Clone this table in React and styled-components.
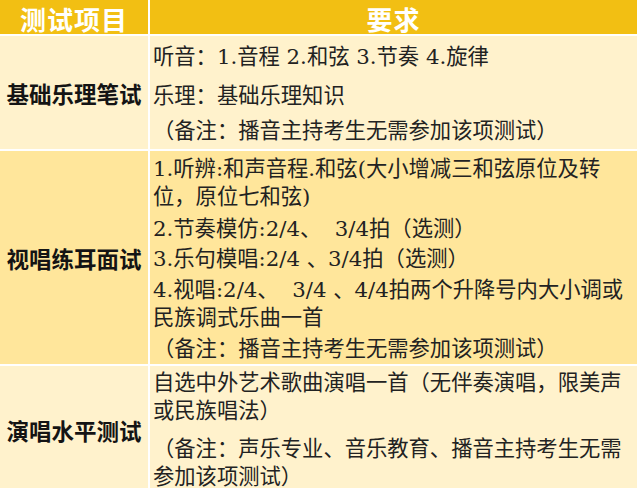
import React from "react";
import styled, { createGlobalStyle } from "styled-components";

const GlobalStyle = createGlobalStyle`
  html, body {
    margin: 0;
    padding: 0;
    background: #fff;
  }
  body {
    font-family: "Noto Sans CJK SC", "Noto Sans", sans-serif;
    color: #1c1c1c;
  }
`;

const rows = [
  {
    label: "基础乐理笔试",
    tone: "light",
    top: 4,
    bottom: 1,
    lineHeight: 34,
    paras: [
      { gap: 0, lines: ["听音：1.音程 2.和弦 3.节奏 4.旋律"] },
      { gap: 5, lines: ["乐理：基础乐理知识"] },
      { gap: 1, lines: ["（备注：播音主持考生无需参加该项测试）"] },
    ],
  },
  {
    label: "视唱练耳面试",
    tone: "dark",
    top: 4,
    bottom: 1,
    lineHeight: 28,
    paras: [
      {
        gap: 0,
        lines: ["1.听辨:和声音程.和弦(大小增减三和弦原位及转", "位，原位七和弦)"],
      },
      { gap: 4, lines: ["2.节奏模仿:2/4、  3/4拍（选测）"] },
      { gap: 2, lines: ["3.乐句模唱:2/4 、3/4拍（选测）"] },
      {
        gap: 3,
        lines: ["4.视唱:2/4、  3/4 、4/4拍两个升降号内大小调或", "民族调式乐曲一首"],
      },
      { gap: 3, lines: ["（备注：播音主持考生无需参加该项测试）"] },
    ],
  },
  {
    label: "演唱水平测试",
    tone: "light",
    top: 3,
    bottom: 3,
    lineHeight: 28,
    paras: [
      {
        gap: 0,
        lines: ["自选中外艺术歌曲演唱一首（无伴奏演唱，限美声", "或民族唱法）"],
      },
      {
        gap: 10,
        lines: ["（备注：声乐专业、音乐教育、播音主持考生无需", "参加该项测试）"],
      },
    ],
  },
];

const App = () => {
  return (
    <>
      <GlobalStyle />
      <Table>
        <HeadCell>测试项目</HeadCell>
        <HeadCell>要求</HeadCell>
        {rows.map((row) => (
          <React.Fragment key={row.label}>
            <LabelCell $tone={row.tone}>{row.label}</LabelCell>
            <BodyCell $tone={row.tone} $top={row.top} $bottom={row.bottom}>
              {row.paras.map((p, i) => (
                <Para key={i} $gap={p.gap} $lh={row.lineHeight}>
                  {p.lines.map((l) => (
                    <Line key={l}>{l}</Line>
                  ))}
                </Para>
              ))}
            </BodyCell>
          </React.Fragment>
        ))}
      </Table>
    </>
  );
};

const Table = styled.div`
  display: grid;
  grid-template-columns: 148px 487px;
  grid-template-rows: 34px auto auto auto;
  column-gap: 2px;
  row-gap: 2px;
  width: 637px;
`;

const HeadCell = styled.div`
  background: #f2bf13;
  color: #fff;
  display: flex;
  align-items: center;
  justify-content: center;
  box-sizing: border-box;
  height: 34px;
  padding-top: 3px;
  font-size: 26px;
  font-weight: 700;
  line-height: 1;
  margin-bottom: 1px;
  letter-spacing: 1px;
`;

const toneColor = (tone) => (tone === "dark" ? "#ffe69b" : "#fff2cc");

const LabelCell = styled.div`
  background: ${(p) => toneColor(p.$tone)};
  display: flex;
  align-items: center;
  justify-content: center;
  font-size: 22.5px;
  font-weight: 700;
  color: #141414;
`;

const BodyCell = styled.div`
  background: ${(p) => toneColor(p.$tone)};
  padding: ${(p) => p.$top}px 0 ${(p) => p.$bottom}px 3px;
  font-family: "DejaVu Serif", "Noto Sans CJK SC", serif;
  font-size: 21.3px;
  font-weight: 400;
  color: #222;
`;

const Para = styled.div`
  margin-top: ${(p) => p.$gap}px;
  line-height: ${(p) => p.$lh}px;
`;

const Line = styled.div`
  white-space: pre;
`;

export default App;
